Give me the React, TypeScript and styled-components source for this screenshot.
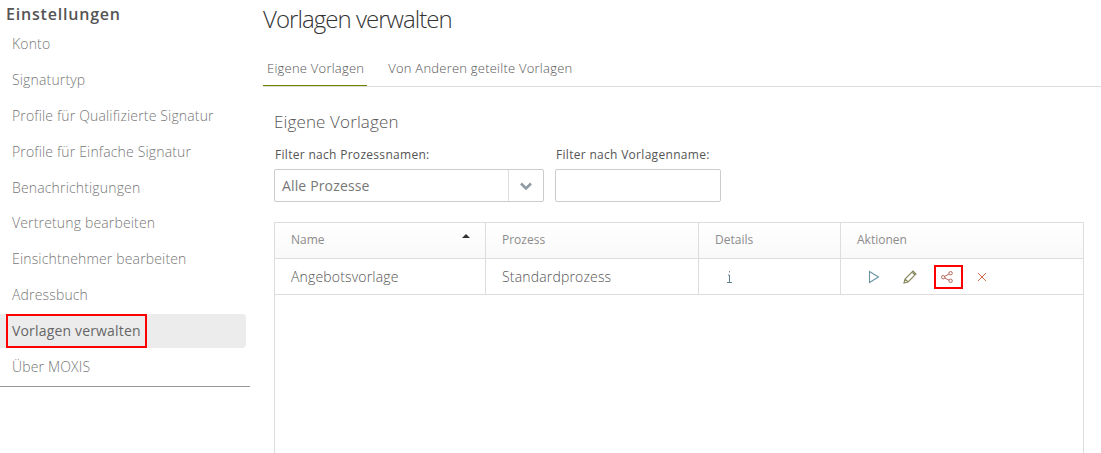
import React, { FC } from "react";
import styled, { createGlobalStyle } from "styled-components";

const GlobalStyle = createGlobalStyle`
  html, body {
    margin: 0;
    padding: 0;
    background: #fff;
    font-family: "Open Sans", "Liberation Sans", sans-serif;
    overflow: hidden;
  }
`;

const Page = styled.div`
  display: flex;
  width: 1101px;
  height: 453px;
  overflow: hidden;
`;

// left menu
const Sidebar = styled.aside`
  width: 250px;
  flex: none;
  align-self: flex-start;
  padding-top: 5px;
  padding-bottom: 2px;
  border-bottom: 1px solid #999;
  height: 379px;
  box-sizing: content-box;
`;

const SideTitle = styled.h3`
  margin: 0 0 4px 6px;
  font-size: 16px;
  line-height: 18px;
  font-weight: 600;
  letter-spacing: 0.8px;
  color: #555;
`;

const SideList = styled.ul`
  list-style: none;
  margin: 0;
  padding: 0 4px 0 0;
`;

const SideItem = styled.li<{ $active?: boolean }>`
  height: 34px;
  box-sizing: border-box;
  margin-bottom: 1.875px;
  padding: 0 0 1px 12px;
  display: flex;
  align-items: center;
  font-size: 14px;
  font-weight: ${(p) => (p.$active ? 400 : 300)};
  letter-spacing: ${(p) => (p.$active ? "0.17px" : "0.16px")};
  color: ${(p) => (p.$active ? "#666" : "#777")};
  background: ${(p) => (p.$active ? "#ececec" : "transparent")};
  border-radius: 0 4px 4px 0;
  position: relative;
`;

const RedMark = styled.span`
  position: absolute;
  border: 2px solid #f00;
  box-sizing: border-box;
  left: 6px;
  top: 0;
  width: 141px;
  height: 34px;
`;

const Main = styled.main`
  flex: 1;
  padding: 3px 0 0 13px;
  min-width: 0;
`;

const PageTitle = styled.h1`
  margin: 0;
  font-size: 24px;
  line-height: 32px;
  font-weight: 300;
  letter-spacing: -0.95px;
  color: #333;
`;

const Tabs = styled.div`
  display: flex;
  margin-top: 16px;
  border-bottom: 1px solid #ddd;
  height: 35px;
`;

const Tab = styled.div<{ $active?: boolean }>`
  padding: 0 3px 0 4px;
  margin-right: 17px;
  font-size: 13px;
  font-weight: 300;
  letter-spacing: 0.23px;
  line-height: 34px;
  height: 35px;
  box-sizing: border-box;
  color: #555;
  border-bottom: ${(p) => (p.$active ? "1px solid #6f8300" : "none")};
`;

const Panel = styled.section`
  padding: 23px 17px 0 11px;
`;

const PanelTitle = styled.h2`
  margin: 0;
  font-size: 17px;
  line-height: 24px;
  font-weight: 300;
  letter-spacing: 0.13px;
  color: #555;
`;

const Filters = styled.div`
  display: flex;
  gap: 11px;
  margin-top: 12px;
`;

const Field = styled.div`
  display: flex;
  flex-direction: column;
`;

const FieldLabel = styled.label`
  font-size: 12px;
  line-height: 18px;
  letter-spacing: 0.3px;
  color: #555;
  padding-left: 1px;
  margin-bottom: 5px;
`;

const SelectBox = styled.div`
  width: 270px;
  height: 33px;
  box-sizing: border-box;
  border: 1px solid #ccc;
  border-radius: 2px;
  display: flex;
  align-items: center;
`;

const SelectValue = styled.span`
  flex: 1;
  padding-left: 7px;
  font-size: 14px;
  letter-spacing: 0.15px;
  color: #777;
`;

const SelectArrow = styled.span`
  width: 34px;
  height: 100%;
  border-left: 1px solid #ddd;
  display: flex;
  align-items: center;
  justify-content: center;
`;

const TextInput = styled.input`
  width: 166px;
  height: 33px;
  box-sizing: border-box;
  border: 1px solid #ccc;
  border-radius: 2px;
  outline: none;
`;

const Table = styled.div`
  margin-top: 20px;
  width: 810px;
  height: 260px;
  box-sizing: border-box;
  border: 1px solid #ddd;
  border-bottom: none;
`;

const Row = styled.div<{ $head?: boolean }>`
  display: grid;
  grid-template-columns: 211px 213px 142px 1fr;
  height: 36px;
  box-sizing: border-box;
  border-bottom: 1px solid #ddd;
  background: ${(p) => (p.$head ? "linear-gradient(#fff, #f9f9f9)" : "#fff")};
`;

const Cell = styled.div<{ $head?: boolean }>`
  display: flex;
  align-items: center;
  padding: ${(p) => (p.$head ? "0 0 2px 16px" : "0 0 0 16px")};
  font-size: ${(p) => (p.$head ? "12px" : "14px")};
  font-weight: ${(p) => (p.$head ? 400 : 300)};
  letter-spacing: ${(p) => (p.$head ? "0" : "0.17px")};
  color: ${(p) => (p.$head ? "#8c8c8c" : "#555")};
  border-right: 1px solid #ddd;
  position: relative;
  &:last-child {
    border-right: none;
  }
`;

const SortArrow = styled.span`
  position: absolute;
  right: 15px;
  top: 11px;
  width: 0;
  height: 0;
  border-left: 4px solid transparent;
  border-right: 4px solid transparent;
  border-bottom: 4px solid #333;
`;

const InfoIcon = styled.svg`
  margin-left: 11px;
`;

const Actions = styled.div`
  display: flex;
  align-items: center;
  gap: 18px;
  padding-left: 8px;
`;

const ActionIcon = styled.span`
  width: 18px;
  height: 24px;
  display: flex;
  align-items: center;
  justify-content: center;
  position: relative;
`;

const ShareIcon = styled.svg`
  margin-left: 2px;
`;

const ShareMark = styled.span`
  position: absolute;
  left: -3px;
  top: 0;
  width: 29px;
  height: 24px;
  box-sizing: border-box;
  border: 2px solid #f00;
`;

const menu = [
  "Konto",
  "Signaturtyp",
  "Profile für Qualifizierte Signatur",
  "Profile für Einfache Signatur",
  "Benachrichtigungen",
  "Vertretung bearbeiten",
  "Einsichtnehmer bearbeiten",
  "Adressbuch",
  "Vorlagen verwalten",
  "Über MOXIS",
];

export const App: FC = function () {
  return (
    <Page>
      <GlobalStyle />
      <Sidebar>
        <SideTitle>Einstellungen</SideTitle>
        <SideList>
          {menu.map((t) => {
            const active = t === "Vorlagen verwalten";
            return (
              <SideItem key={t} $active={active}>
                {t}
                {active && <RedMark />}
              </SideItem>
            );
          })}
        </SideList>
      </Sidebar>
      <Main>
        <PageTitle>Vorlagen verwalten</PageTitle>
        <Tabs>
          <Tab $active>Eigene Vorlagen</Tab>
          <Tab>Von Anderen geteilte Vorlagen</Tab>
        </Tabs>
        <Panel>
          <PanelTitle>Eigene Vorlagen</PanelTitle>
          <Filters>
            <Field>
              <FieldLabel>Filter nach Prozessnamen:</FieldLabel>
              <SelectBox>
                <SelectValue>Alle Prozesse</SelectValue>
                <SelectArrow>
                  <svg width="14" height="10" viewBox="0 0 14 10">
                    <path d="M2 2.5l5 5 5-5" fill="none" stroke="#8f9aa3" strokeWidth="2.6" />
                  </svg>
                </SelectArrow>
              </SelectBox>
            </Field>
            <Field>
              <FieldLabel>Filter nach Vorlagenname:</FieldLabel>
              <TextInput />
            </Field>
          </Filters>
          <Table>
            <Row $head>
              <Cell $head>
                Name
                <SortArrow />
              </Cell>
              <Cell $head>Prozess</Cell>
              <Cell $head>Details</Cell>
              <Cell $head>Aktionen</Cell>
            </Row>
            <Row>
              <Cell>Angebotsvorlage</Cell>
              <Cell>Standardprozess</Cell>
              <Cell>
                <InfoIcon width="7" height="13" viewBox="0 0 7 13">
                  <path d="M3.5 1v1.4M2 5h1.5v7M1 12.5h5" fill="none" stroke="#5f7f90" />
                </InfoIcon>
              </Cell>
              <Cell>
                <Actions>
                  <ActionIcon>
                    <svg width="12" height="14" viewBox="0 0 12 14">
                      <path d="M1.5 1.5v11l9-5.5z" fill="none" stroke="#6a93a0" strokeWidth="1.1" />
                    </svg>
                  </ActionIcon>
                  <ActionIcon>
                    <svg width="15" height="15" viewBox="0 0 15 15">
                      <path d="M1 14l1-4 8-8 3 3-8 8zM2 10l3 3M9 3l3 3" fill="none" stroke="#85875a" strokeWidth="1.1" />
                    </svg>
                  </ActionIcon>
                  <ActionIcon>
                    <ShareIcon width="12" height="12" viewBox="0 0 12 12">
                      <g fill="none" stroke="#b5665a" strokeWidth="1">
                        <circle cx="2.2" cy="6.2" r="1.7" />
                        <circle cx="9.6" cy="2.2" r="1.7" />
                        <circle cx="9.6" cy="9.8" r="1.7" />
                        <path d="M3.7 5.4L8.1 3M3.7 7l4.4 2.2" />
                      </g>
                    </ShareIcon>
                    <ShareMark />
                  </ActionIcon>
                  <ActionIcon>
                    <svg width="10" height="10" viewBox="0 0 10 10">
                      <path d="M1 1l8 8M9 1l-8 8" stroke="#d2694a" />
                    </svg>
                  </ActionIcon>
                </Actions>
              </Cell>
            </Row>
          </Table>
        </Panel>
      </Main>
    </Page>
  );
};

export default App;
